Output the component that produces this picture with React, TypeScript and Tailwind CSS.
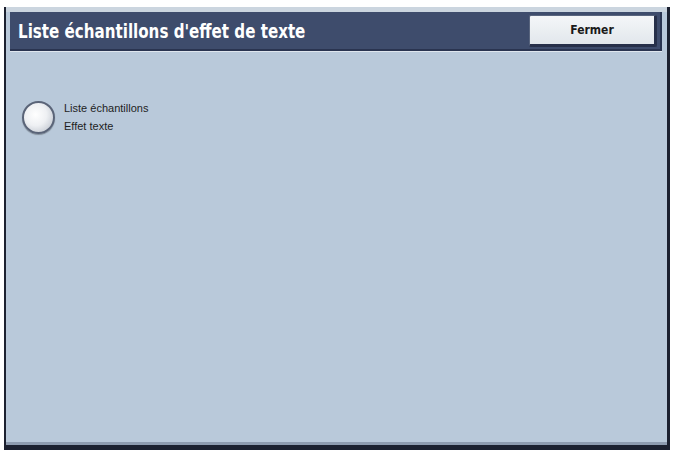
import React from 'react';

export default function App() {
  return (
    <div className="w-[673px] h-[454px] bg-white pt-[7px] pl-[4px] pr-[3px]">
      <div className="h-[443px] flex flex-col bg-[#b9c9da] border-l-2 border-r-[3px] border-b-[5px] border-[#1c2130]">
        <div className="h-[5px] bg-[#cbd5df]" />
        <div className="h-[39px] ml-[4px] mr-[5px] flex items-center justify-between bg-[#3e4c6c] border-b-2 border-r-2 border-[#2a3450] shadow-[0_1px_0_#dfe6ee]">
          <span
            className="ml-[8px] inline-block origin-left scale-x-[0.84] whitespace-nowrap text-white text-[20px] font-bold leading-none"
            style={{ fontFamily: '"DejaVu Sans Condensed", "Liberation Sans Narrow", "Liberation Sans", sans-serif' }}
          >
            Liste échantillons d'effet de texte
          </span>
          <button
            className="mr-[3px] w-[128px] h-[32px] rounded-[2px] bg-gradient-to-b from-[#f4f6f8] to-[#e2e7ec] border border-[#59657e] border-b-[3px] border-r-[3px] border-b-[#27304a] border-r-[#27304a] text-[12px] font-bold text-[#1a1a1a]"
            style={{ fontFamily: '"DejaVu Sans Condensed", "Liberation Sans", sans-serif' }}
          >
            Fermer
          </button>
        </div>
        <div className="flex-1 flex flex-col">
          <div className="mt-[48px] ml-[16px] flex items-center gap-[9px]">
            <div className="w-[33px] h-[33px] rounded-full border-[2px] border-[#5a6478] bg-[radial-gradient(circle_at_40%_40%,#ffffff_0%,#eef0f3_45%,#c9ced6_80%,#8d96a6_100%)] shadow-[0_1px_1px_rgba(0,0,0,0.3)]" />
            <div className="text-[11px] leading-[18px] text-[#1e1e1e]" style={{ fontFamily: '"Liberation Sans", Arial, sans-serif' }}>
              <div>Liste échantillons</div>
              <div>Effet texte</div>
            </div>
          </div>
        </div>
        <div className="h-[3px] bg-[#8e9cb0]" />
      </div>
    </div>
  );
}
